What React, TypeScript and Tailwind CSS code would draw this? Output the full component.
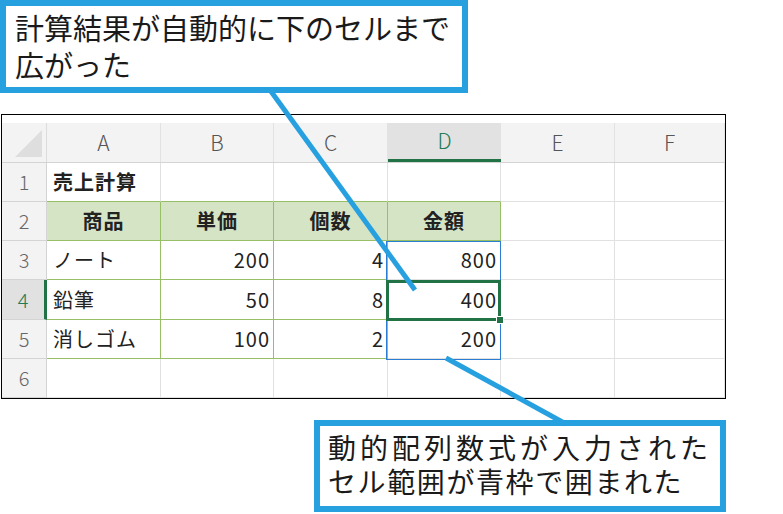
const cols = ["A", "B", "C", "D", "E", "F"]

type Cell = { text?: string; align?: "left" | "right" | "center"; bold?: boolean; head?: boolean; green?: boolean }

const rows: Cell[][] = [
  [{ text: "売上計算", bold: true }, {}, {}, {}, {}, {}],
  [
    { text: "商品", bold: true, align: "center", head: true },
    { text: "単価", bold: true, align: "center", head: true },
    { text: "個数", bold: true, align: "center", head: true },
    { text: "金額", bold: true, align: "center", head: true },
    {},
    {},
  ],
  [{ text: "ノート", green: true }, { text: "200", align: "right", green: true }, { text: "4", align: "right", green: true }, { text: "800", align: "right" }, {}, {}],
  [{ text: "鉛筆", green: true }, { text: "50", align: "right", green: true }, { text: "8", align: "right", green: true }, { text: "400", align: "right" }, {}, {}],
  [{ text: "消しゴム", green: true }, { text: "100", align: "right", green: true }, { text: "2", align: "right", green: true }, { text: "200", align: "right" }, {}, {}],
  [{}, {}, {}, {}, {}, {}],
]

const inGreen = (r: number, c: number) => {
  const cell = rows[r]?.[c]
  return !!cell && (!!cell.head || !!cell.green)
}

const font = { fontFamily: '"Noto Sans CJK JP", "Noto Sans", sans-serif' }

function Sheet() {
  return (
    <div className="ml-[1px] mt-[21px] w-[725px] border border-black bg-white" style={font}>
      <div className="h-[8px]" />
      {/* column header */}
      <div className="grid grid-cols-[45px_114px_113px_114px_113px_114px_110px] h-[40px] bg-[#f3f3f3] border-b border-[#d4d4d4]">
        <div className="relative border-r border-[#dcdcdc]">
          <div className="absolute right-[4px] bottom-[5px] w-0 h-0 border-l-[27px] border-l-transparent border-b-[27px] border-b-[#dedede]" />
        </div>
        {cols.map((c) =>
          c === "D" ? (
            <div key={c} className="flex items-center justify-center bg-[#e2e2e2] border-b-[3px] border-[#217346] text-[21px] text-[#1e7b55] font-light">
              {c}
            </div>
          ) : (
            <div key={c} className="flex items-center justify-center border-r border-[#e2e2e2] text-[21px] text-[#555] font-light">
              {c}
            </div>
          )
        )}
      </div>
      {rows.map((row, r) => (
        <div
          key={r}
          className={`grid grid-cols-[45px_114px_113px_114px_113px_114px_110px] ${r === 3 ? "h-[40px]" : "h-[39px]"}`}
        >
          {r === 3 ? (
            <div className="flex items-center justify-center bg-[#e1e1e1] border-r-[3px] border-r-[#217346] border-b border-b-[#d4d4d4] text-[20px] text-[#1e7b55] font-light">
              {r + 1}
            </div>
          ) : (
            <div className="flex items-center justify-center bg-[#f3f3f3] border-r border-b border-[#d4d4d4] text-[20px] text-[#666] font-light">
              {r + 1}
            </div>
          )}
          {row.map((cell, c) => {
            const g = inGreen(r, c)
            const right = g || inGreen(r, c + 1) ? "border-r-[#97c066]" : "border-r-[#e1e1e1]"
            const bottom = g || inGreen(r + 1, c) ? "border-b-[#97c066]" : "border-b-[#e1e1e1]"
            const align =
              cell.align === "right" ? "justify-end pr-[3px]" : cell.align === "center" ? "justify-center" : "justify-start pl-[6px]"
            return (
              <div
                key={c}
                className={`flex items-center border-r border-b ${right} ${bottom} ${align} ${
                  cell.head ? "bg-[#d6e4c6]" : "bg-white"
                } ${cell.bold ? "font-bold" : "font-normal"} text-[20px] text-[#222] tracking-[1px]`}
              >
                {cell.text}
              </div>
            )
          })}
        </div>
      ))}
    </div>
  )
}

export default function App() {
  return (
    <div className="relative w-[783px] h-[514px] bg-white overflow-hidden" style={font}>
      <div className="w-[468px] h-[93px] border-[6px] border-[#27a0e0] bg-white pl-[9px] pt-[3px] text-[29px] text-[#1a1a1a]">
        <div className="h-[37px] leading-[37px]">計算結果が自動的に下のセルまで</div>
        <div className="h-[37px] leading-[37px]">広がった</div>
      </div>

      <Sheet />

      <div className="ml-[314px] mt-[21px] w-[412px] h-[92px] border-[6px] border-[#27a0e0] bg-white pl-[8px] pt-[4px] text-[28px] text-[#1a1a1a]">
        <div className="h-[34px] leading-[34px] tracking-[4px]">動的配列数式が入力された</div>
        <div className="h-[34px] leading-[34px] tracking-[1.6px]">セル範囲が青枠で囲まれた</div>
      </div>

      {/* selection overlays */}
      <div className="absolute left-[386px] top-[241px] w-[115px] h-[119px] border border-[#2b7cd3]" />
      <div className="absolute left-[386px] top-[280px] w-[115px] h-[41px] border-[3px] border-[#217346]" />
      <div className="absolute left-[496px] top-[316px] w-[8px] h-[8px] bg-[#217346] border border-white" />

      {/* callout leader lines */}
      <svg className="absolute left-0 top-0" width="783" height="514">
        <line x1="270" y1="90" x2="415" y2="290" stroke="#27a0e0" strokeWidth="5" />
        <line x1="446" y1="358" x2="566" y2="424" stroke="#27a0e0" strokeWidth="5" />
      </svg>
    </div>
  )
}
